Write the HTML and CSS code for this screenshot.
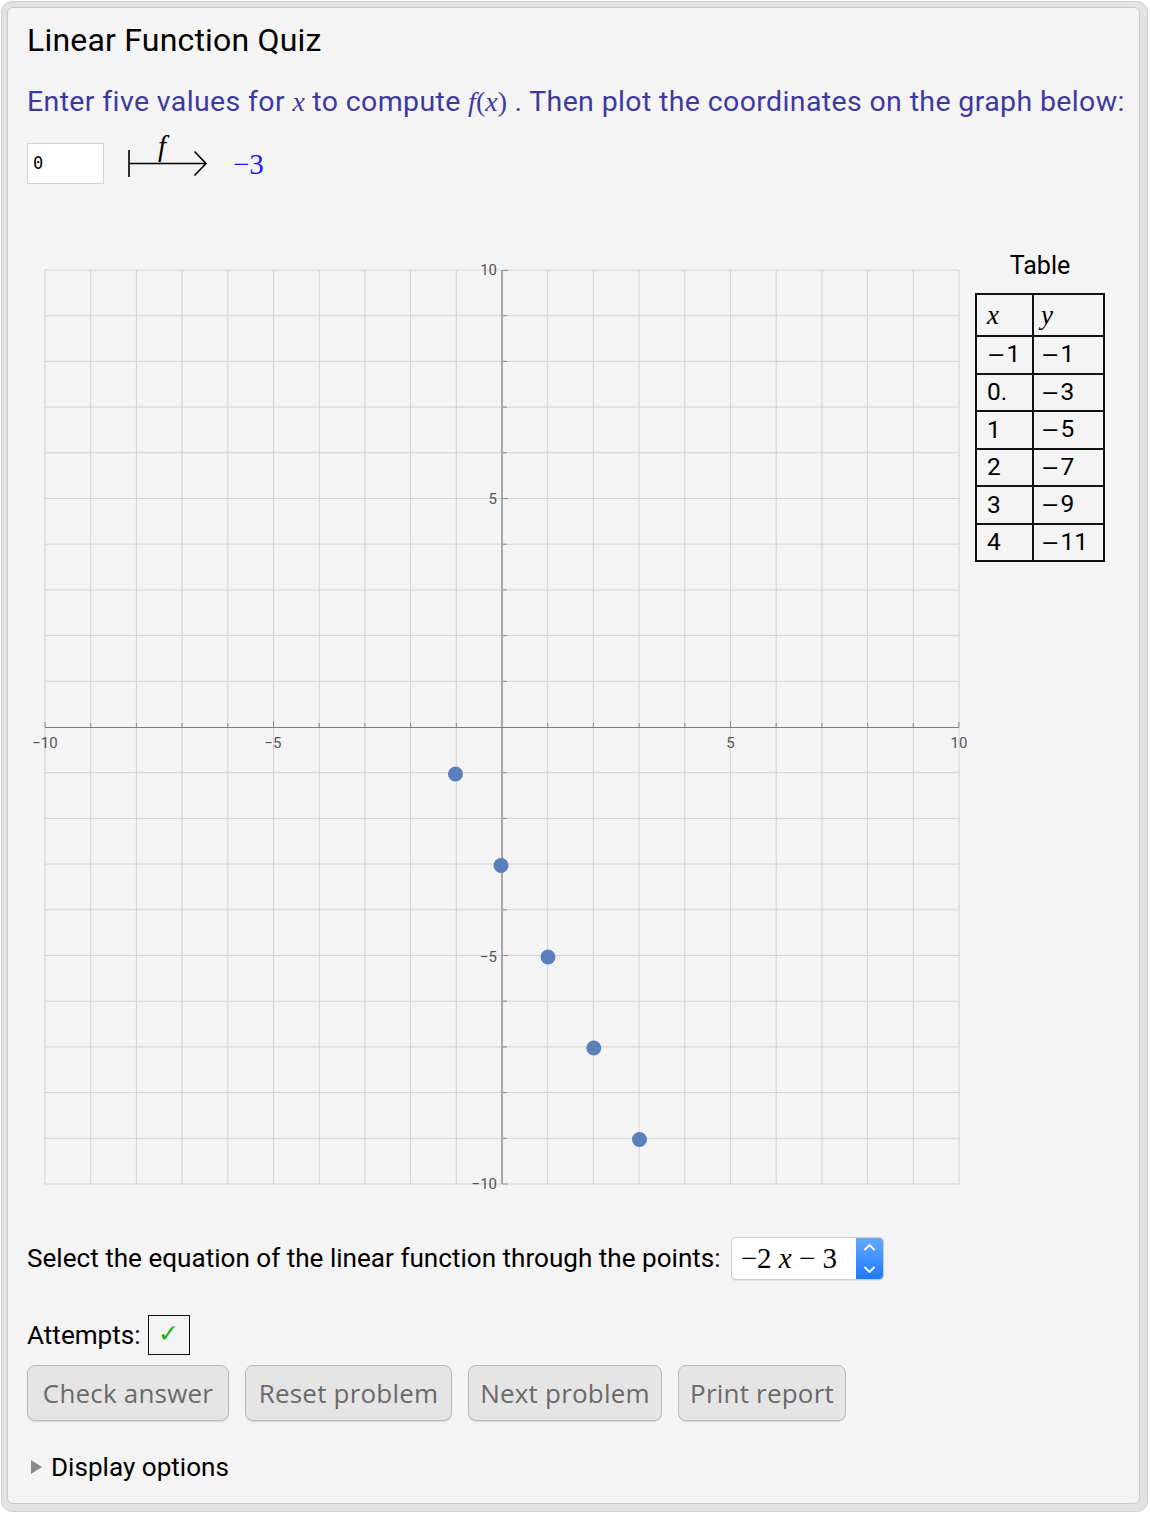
FILE: index.html
```html
<!DOCTYPE html>
<html>
<head>
<meta charset="utf-8">
<link rel="stylesheet" href="styles.css">
</head>
<body>
<div class="frame">
  <div class="inner">
    <h1 class="title">Linear Function Quiz</h1>
    <p class="prompt">Enter five values for <span class="m">x</span> to compute <span class="m">f</span><span class="mr">(</span><span class="m">x</span><span class="mr">)</span> . Then plot the coordinates on the graph below:</p>
    <div class="inrow">
      <div class="numbox">0</div>
      <svg class="mapsto" width="100" height="56" viewBox="120 130 100 56">
        <text x="158" y="156" class="fsym">f</text>
        <path d="M129 150 V177 M129 163.5 H206 M194.5 151.5 L206 163.5 L194.5 175.5" fill="none" stroke="#000" stroke-width="1.6"/>
      </svg>
      <span class="result">−3</span>
    </div>
    <div class="graphrow">
      <svg class="plot" width="940" height="950" viewBox="27 250 940 950">
        <path class="grid" d="M45 270V1184M90.7 270V1184M136.4 270V1184M182.1 270V1184M227.8 270V1184M273.5 270V1184M319.2 270V1184M364.9 270V1184M410.6 270V1184M456.3 270V1184M547.7 270V1184M593.4 270V1184M639.1 270V1184M684.8 270V1184M730.5 270V1184M776.2 270V1184M821.9 270V1184M867.6 270V1184M913.3 270V1184M959 270V1184M45 270H959M45 315.7H959M45 361.4H959M45 407.1H959M45 452.8H959M45 498.5H959M45 544.2H959M45 589.9H959M45 635.6H959M45 681.3H959M45 772.7H959M45 818.4H959M45 864.1H959M45 909.8H959M45 955.5H959M45 1001.2H959M45 1046.9H959M45 1092.6H959M45 1138.3H959M45 1184H959"/>
        <path class="yaxis" d="M502 270V1184"/>
        <path class="xaxis" d="M45 727.5H959"/>
        <path class="ticks" d="M45 727V722M90.7 727V723M136.4 727V723M182.1 727V723M227.8 727V723M273.5 727V721M319.2 727V723M364.9 727V723M410.6 727V723M456.3 727V723M547.7 727V723M593.4 727V723M639.1 727V723M684.8 727V723M730.5 727V721M776.2 727V723M821.9 727V723M867.6 727V723M913.3 727V723M959 727V722M503 270.5H508M503 315.7H507M503 361.4H507M503 407.1H507M503 452.8H507M503 498.5H508M503 544.2H507M503 589.9H507M503 635.6H507M503 681.3H507M503 772.7H507M503 818.4H507M503 864.1H507M503 909.8H507M503 955.5H508M503 1001.2H507M503 1046.9H507M503 1092.6H507M503 1138.3H507M503 1184H508"/>
        <g class="lbl">
          <text x="497" y="275" text-anchor="end">10</text>
          <text x="497" y="504" text-anchor="end">5</text>
          <text x="497" y="962" text-anchor="end">−5</text>
          <text x="497" y="1189" text-anchor="end">−10</text>
          <text x="45" y="748" text-anchor="middle">−10</text>
          <text x="273" y="748" text-anchor="middle">−5</text>
          <text x="730.5" y="748" text-anchor="middle">5</text>
          <text x="959" y="748" text-anchor="middle">10</text>
        </g>
        <g class="pts">
          <circle cx="455.5" cy="774" r="7.5"/>
          <circle cx="501" cy="865.5" r="7.5"/>
          <circle cx="548" cy="957" r="7.5"/>
          <circle cx="593.8" cy="1048" r="7.5"/>
          <circle cx="639.5" cy="1139.5" r="7.5"/>
        </g>
      </svg>
      <div class="tablecol">
        <div class="tcap">Table</div>
        <table class="vals">
          <tr class="hd"><td class="c1"><span class="m">x</span></td><td class="c2"><span class="m">y</span></td></tr>
          <tr><td class="c1"><span class="mn">−</span>1</td><td class="c2"><span class="mn">−</span>1</td></tr>
          <tr><td class="c1">0.</td><td class="c2"><span class="mn">−</span>3</td></tr>
          <tr><td class="c1">1</td><td class="c2"><span class="mn">−</span>5</td></tr>
          <tr><td class="c1">2</td><td class="c2"><span class="mn">−</span>7</td></tr>
          <tr><td class="c1">3</td><td class="c2"><span class="mn">−</span>9</td></tr>
          <tr><td class="c1">4</td><td class="c2"><span class="mn">−</span>11</td></tr>
        </table>
      </div>
    </div>
    <div class="selrow">
      <span class="lab">Select the equation of the linear function through the points:</span>
      <div class="dropdown">
        <span class="ddval">−2 <span class="mi">x</span> − 3</span>
        <span class="stepper">
          <svg width="27" height="41" viewBox="0 0 27 41"><path d="M9 11.5 L13.5 7 L18 11.5 M9 29.5 L13.5 34 L18 29.5" fill="none" stroke="#fff" stroke-width="1.8" stroke-linecap="round" stroke-linejoin="round"/></svg>
        </span>
      </div>
    </div>
    <div class="attrow">
      <span class="lab">Attempts:</span>
      <span class="chk">✓</span>
    </div>
    <div class="btnrow">
      <button class="btn w1">Check answer</button>
      <button class="btn w2">Reset problem</button>
      <button class="btn w3">Next problem</button>
      <button class="btn w4">Print report</button>
    </div>
    <div class="opts">
      <span class="tri"></span>
      <span class="lab">Display options</span>
    </div>
  </div>
</div>
</body>
</html>
```
FILE: styles.css
```css
html, body {
  margin: 0;
  padding: 0;
  background: #ffffff;
}
body {
  font-family: Roboto, "Liberation Sans", sans-serif;
  color: #000;
}
.frame {
  box-sizing: border-box;
  width: 1147px;
  height: 1511px;
  margin: 1px 0 0 1px;
  border: 1px solid #d0d0d0;
  border-radius: 11px;
  background: #e3e3e3;
  padding: 5px 7px 7px 5px;
}
.inner {
  box-sizing: border-box;
  height: 100%;
  border: 1px solid #c9c9c9;
  border-radius: 6px;
  background: #f4f4f4;
  padding: 0 0 0 19px;
  display: flex;
  flex-direction: column;
}
.title {
  margin: 14px 0 0 0;
  font-size: 32px;
  line-height: 36px;
  font-weight: 400;
  letter-spacing: 0.2px;
}
.prompt {
  margin: 26px 0 0 0;
  font-size: 28.5px;
  line-height: 36px;
  color: #3d3a9f;
  white-space: nowrap;
  letter-spacing: 0.37px;
}
.m {
  font-family: "Liberation Serif", "DejaVu Serif", serif;
  font-style: italic;
  font-size: 28px;
  letter-spacing: 0;
}
.mr {
  font-family: "Liberation Serif", "DejaVu Serif", serif;
  font-size: 28px;
  letter-spacing: 0;
}
.inrow {
  margin-top: 23px;
  height: 40px;
  display: flex;
  align-items: center;
}
.numbox {
  box-sizing: border-box;
  width: 77px;
  height: 41px;
  background: #fff;
  border: 1px solid #d2d2d2;
  font-family: "DejaVu Sans Mono", "Liberation Mono", monospace;
  font-size: 17px;
  line-height: 39px;
  padding-left: 5px;
}
.mapsto {
  margin-left: 16px;
  margin-top: -10px;
}
.fsym {
  font-family: "Liberation Serif", serif;
  font-style: italic;
  font-size: 29px;
}
.result {
  margin-left: 13px;
  font-family: "Liberation Serif", "DejaVu Serif", serif;
  font-size: 29px;
  color: #1a1aff;
  position: relative;
  top: 1px;
}
.graphrow {
  margin-top: 67px;
  height: 950px;
  display: flex;
  align-items: flex-start;
}
.plot {
  display: block;
  flex: none;
}
.grid {
  stroke: #d2d2d2;
  stroke-width: 1;
  fill: none;
}
.yaxis {
  stroke: #a8a8a8;
  stroke-width: 2;
}
.xaxis {
  stroke: #7e7e7e;
  stroke-width: 1.2;
}
.ticks {
  stroke: #8a8a8a;
  stroke-width: 1;
  fill: none;
}
.lbl text {
  font-family: Roboto, "Liberation Sans", sans-serif;
  font-size: 15px;
  fill: #555;
}
.pts circle {
  fill: #5b7fba;
}
.tablecol {
  margin-left: 8px;
  margin-top: 1px;
  display: flex;
  flex-direction: column;
  align-items: center;
}
.tcap {
  font-size: 25px;
  line-height: 30px;
  margin-bottom: 12px;
}
.vals {
  border-collapse: collapse;
  border: 2px solid #111;
  font-size: 24.5px;
}
.vals td {
  border: 2px solid #111;
  padding: 0 0 0 10px;
  height: 35.5px;
  line-height: 30px;
  text-align: left;
  vertical-align: middle;
  white-space: nowrap;
}
.vals tr.hd td {
  height: 40px;
}
.vals td.c1 {
  width: 45px;
}
.vals td.c2 {
  width: 62px;
  padding-left: 7px;
}
.vals .m {
  font-size: 27px;
}
.mn {
  font-family: "DejaVu Sans", sans-serif;
  font-size: 22px;
  margin-right: 1px;
}
.selrow {
  margin-top: 36px;
  height: 44px;
  display: flex;
  align-items: center;
}
.lab {
  font-size: 26.1px;
  line-height: 30px;
}
.dropdown {
  box-sizing: border-box;
  margin-left: 10px;
  width: 153px;
  height: 43px;
  background: #fff;
  border: 1px solid #cdcdcd;
  border-radius: 5px;
  display: flex;
  align-items: center;
  justify-content: space-between;
  box-shadow: 0 1px 1px rgba(0,0,0,0.08);
}
.ddval {
  margin-left: 9px;
  font-family: "Liberation Serif", "DejaVu Serif", serif;
  font-size: 29px;
  white-space: nowrap;
}
.mi {
  font-style: italic;
}
.stepper {
  width: 27px;
  height: 41px;
  border-radius: 0 4px 4px 0;
  background: linear-gradient(#66a9ff, #1b7bff);
  display: block;
}
.stepper svg {
  display: block;
}
.attrow {
  margin-top: 35px;
  height: 40px;
  display: flex;
  align-items: center;
}
.chk {
  box-sizing: border-box;
  margin-left: 7px;
  width: 42px;
  height: 40px;
  border: 1.5px solid #111;
  color: #17b017;
  font-family: "DejaVu Sans", sans-serif;
  font-size: 25px;
  line-height: 36px;
  text-align: center;
}
.btnrow {
  margin-top: 10px;
  height: 56px;
  display: flex;
  gap: 16px;
}
.btn {
  box-sizing: border-box;
  height: 56px;
  background: #e5e5e5;
  border: 1px solid #b9b9b9;
  border-radius: 8px;
  font-family: "Open Sans", "DejaVu Sans", sans-serif;
  font-size: 26px;
  letter-spacing: 0.2px;
  color: #6a6a6a;
  padding: 0;
  box-shadow: 0 1px 1px rgba(0,0,0,0.1);
}
.w1 { width: 202px; }
.w2 { width: 207px; }
.w3 { width: 194px; }
.w4 { width: 168px; }
.opts {
  margin-top: 31px;
  height: 30px;
  display: flex;
  align-items: center;
}
.tri {
  width: 0;
  height: 0;
  margin-left: 4px;
  border-left: 11px solid #8a8a8a;
  border-top: 7px solid transparent;
  border-bottom: 7px solid transparent;
  margin-right: 9px;
}
```
